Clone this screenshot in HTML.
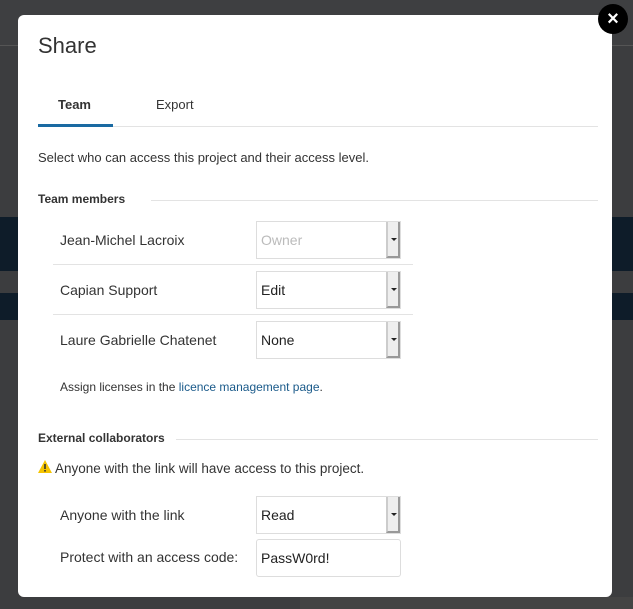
<!DOCTYPE html>
<html><head><style>
*{margin:0;padding:0;box-sizing:border-box}
body{width:633px;height:609px;background:#3c3d3f;position:relative;overflow:hidden;font-family:"Liberation Sans",sans-serif;color:#333}
.a{position:absolute}
.modal{left:18px;top:15px;width:594px;height:582px;background:#fff;border-radius:6px}
.sel{position:absolute;width:145px;height:38px;border:1px solid #ddd;background:#fff;font-size:14px;padding:10px 4px;color:#222}
.sel .b{position:absolute;right:0;top:0;width:14px;height:36px;background:#eee;border-left:2px solid #ccc;border-right:2px solid #999;border-bottom:2px solid #999}
.sel .b:after{content:"";position:absolute;left:3px;top:16px;border-left:3px solid transparent;border-right:3px solid transparent;border-top:3px solid #222}
.lbl{position:absolute;font-size:14px;color:#333}
.h{position:absolute;font-size:12px;font-weight:bold;color:#333}
.line{position:absolute;height:1px;background:#e3e3e3}
</style></head><body>
<div class="a" style="left:0;top:0;width:633px;height:46px;background:#3e3f41;border-bottom:1px solid #555"></div>
<div class="a" style="left:0;top:217px;width:633px;height:54px;background:#0e1c29"></div>
<div class="a" style="left:0;top:293px;width:633px;height:27px;background:#0e1c29"></div>
<div class="a" style="left:300px;top:597px;width:333px;height:12px;background:#444"></div>
<div class="a modal">
<div class="a" style="left:20px;top:18px;font-size:22px;color:#333">Share</div>
<div class="a" style="left:40px;top:82px;font-size:13px;font-weight:bold">Team</div>
<div class="a" style="left:138px;top:82px;font-size:13px">Export</div>
<div class="line" style="left:20px;top:111px;width:560px"></div>
<div class="a" style="left:20px;top:109px;width:75px;height:3px;background:#1a6aa2"></div>
<div class="a" style="left:20px;top:135px;font-size:13px">Select who can access this project and their access level.</div>
<div class="h" style="left:20px;top:177px">Team members</div>
<div class="line" style="left:133px;top:185px;width:447px"></div>
<div class="lbl" style="left:42px;top:217px">Jean-Michel Lacroix</div>
<div class="sel" style="left:238px;top:206px;color:#bbb">Owner<div class="b"></div></div>
<div class="line" style="left:35px;top:249px;width:360px"></div>
<div class="lbl" style="left:42px;top:267px">Capian Support</div>
<div class="sel" style="left:238px;top:256px">Edit<div class="b"></div></div>
<div class="line" style="left:35px;top:299px;width:360px"></div>
<div class="lbl" style="left:42px;top:317px">Laure Gabrielle Chatenet</div>
<div class="sel" style="left:238px;top:306px">None<div class="b"></div></div>
<div class="a" style="left:42px;top:365px;font-size:12px">Assign licenses in the <span style="color:#1a5a8a">licence management page</span>.</div>
<div class="h" style="left:20px;top:416px">External collaborators</div>
<div class="line" style="left:158px;top:424px;width:422px"></div>
<svg class="a" style="left:20px;top:445px" width="14" height="13" viewBox="0 0 14 13"><path d="M7 0L14 13H0Z" fill="#f5c400"/><rect x="6.2" y="4" width="1.6" height="5" fill="#333"/><rect x="6.2" y="10" width="1.6" height="1.6" fill="#333"/></svg>
<div class="a" style="left:37px;top:446px;font-size:13.5px">Anyone with the link will have access to this project.</div>
<div class="lbl" style="left:42px;top:492px">Anyone with the link</div>
<div class="sel" style="left:238px;top:481px">Read<div class="b"></div></div>
<div class="lbl" style="left:42px;top:534px">Protect with an access code:</div>
<div class="sel" style="left:238px;top:524px;height:38px;border-radius:3px">PassW0rd!</div>
</div>
<div class="a" style="left:598px;top:4px;width:30px;height:30px;border-radius:50%;background:#000;color:#fff;font-size:20px;text-align:center;line-height:30px;font-weight:bold">×</div>
</body></html>
